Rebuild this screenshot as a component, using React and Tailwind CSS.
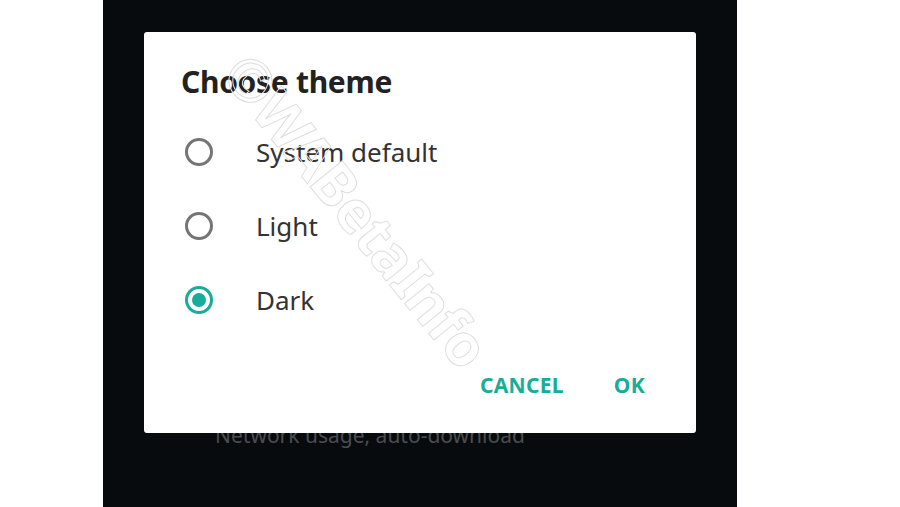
import React, { useState } from "react";

const options = ["System default", "Light", "Dark"];

const Radio = ({ checked }) => (
  <span
    className={
      "flex items-center justify-center w-[28px] h-[28px] rounded-full border-[3px] " +
      (checked ? "border-[#17ad98]" : "border-[#757575]")
    }
  >
    {checked && <span className="w-[14px] h-[14px] rounded-full bg-[#17ad98]" />}
  </span>
);

const App = () => {
  const [theme, setTheme] = useState("Dark");

  return (
    <div
      className="w-[900px] h-[507px] bg-white flex overflow-hidden"
      style={{ fontFamily: '"Noto Sans", "Open Sans", sans-serif' }}
    >
      <div className="ml-[103px] w-[634px] h-full bg-[#070b0e] relative overflow-hidden">
        {/* settings list behind the dialog */}
        <div className="flex flex-col pl-[112px] pt-[420px] gap-[52px]">
          <span className="text-[21px] text-[#4a4d50] leading-[30px]">
            Network usage, auto-download
          </span>
          <span className="text-[21px] text-[#4a4d50] leading-[30px]">Help</span>
        </div>

        {/* dialog */}
        <div className="absolute left-[41px] top-[32px] w-[552px] h-[401px] bg-white rounded-[3px] flex flex-col">
          <h2 className="pl-[37px] pt-[30px] text-[30px] font-bold text-[#222] leading-[40px] tracking-[-0.3px]">
            Choose theme
          </h2>
          <div className="flex flex-col mt-[13px]">
            {options.map((opt) => (
              <button
                key={opt}
                onClick={() => setTheme(opt)}
                className="flex items-center h-[74px] pl-[41px] text-left"
              >
                <Radio checked={theme === opt} />
                <span className="ml-[43px] text-[26px] text-[#333] leading-[34px]">{opt}</span>
              </button>
            ))}
          </div>
          <div className="flex justify-end items-center gap-[50px] pr-[51px] mt-[34px]">
            <button className="text-[21px] font-bold text-[#17ad98] leading-[28px] tracking-[0.3px]">CANCEL</button>
            <button className="text-[21px] font-bold text-[#17ad98] leading-[28px] tracking-[0.3px]">OK</button>
          </div>

          {/* watermark */}
          <span className="absolute left-[-17px] top-[147px] w-[460px] text-center rotate-[51deg] text-[58px] font-bold leading-[62px] tracking-[-1px] text-transparent [-webkit-text-stroke:1px_#dedede] pointer-events-none select-none">
            ©WABetaInfo
          </span>
        </div>
      </div>
    </div>
  );
};

export default App;
